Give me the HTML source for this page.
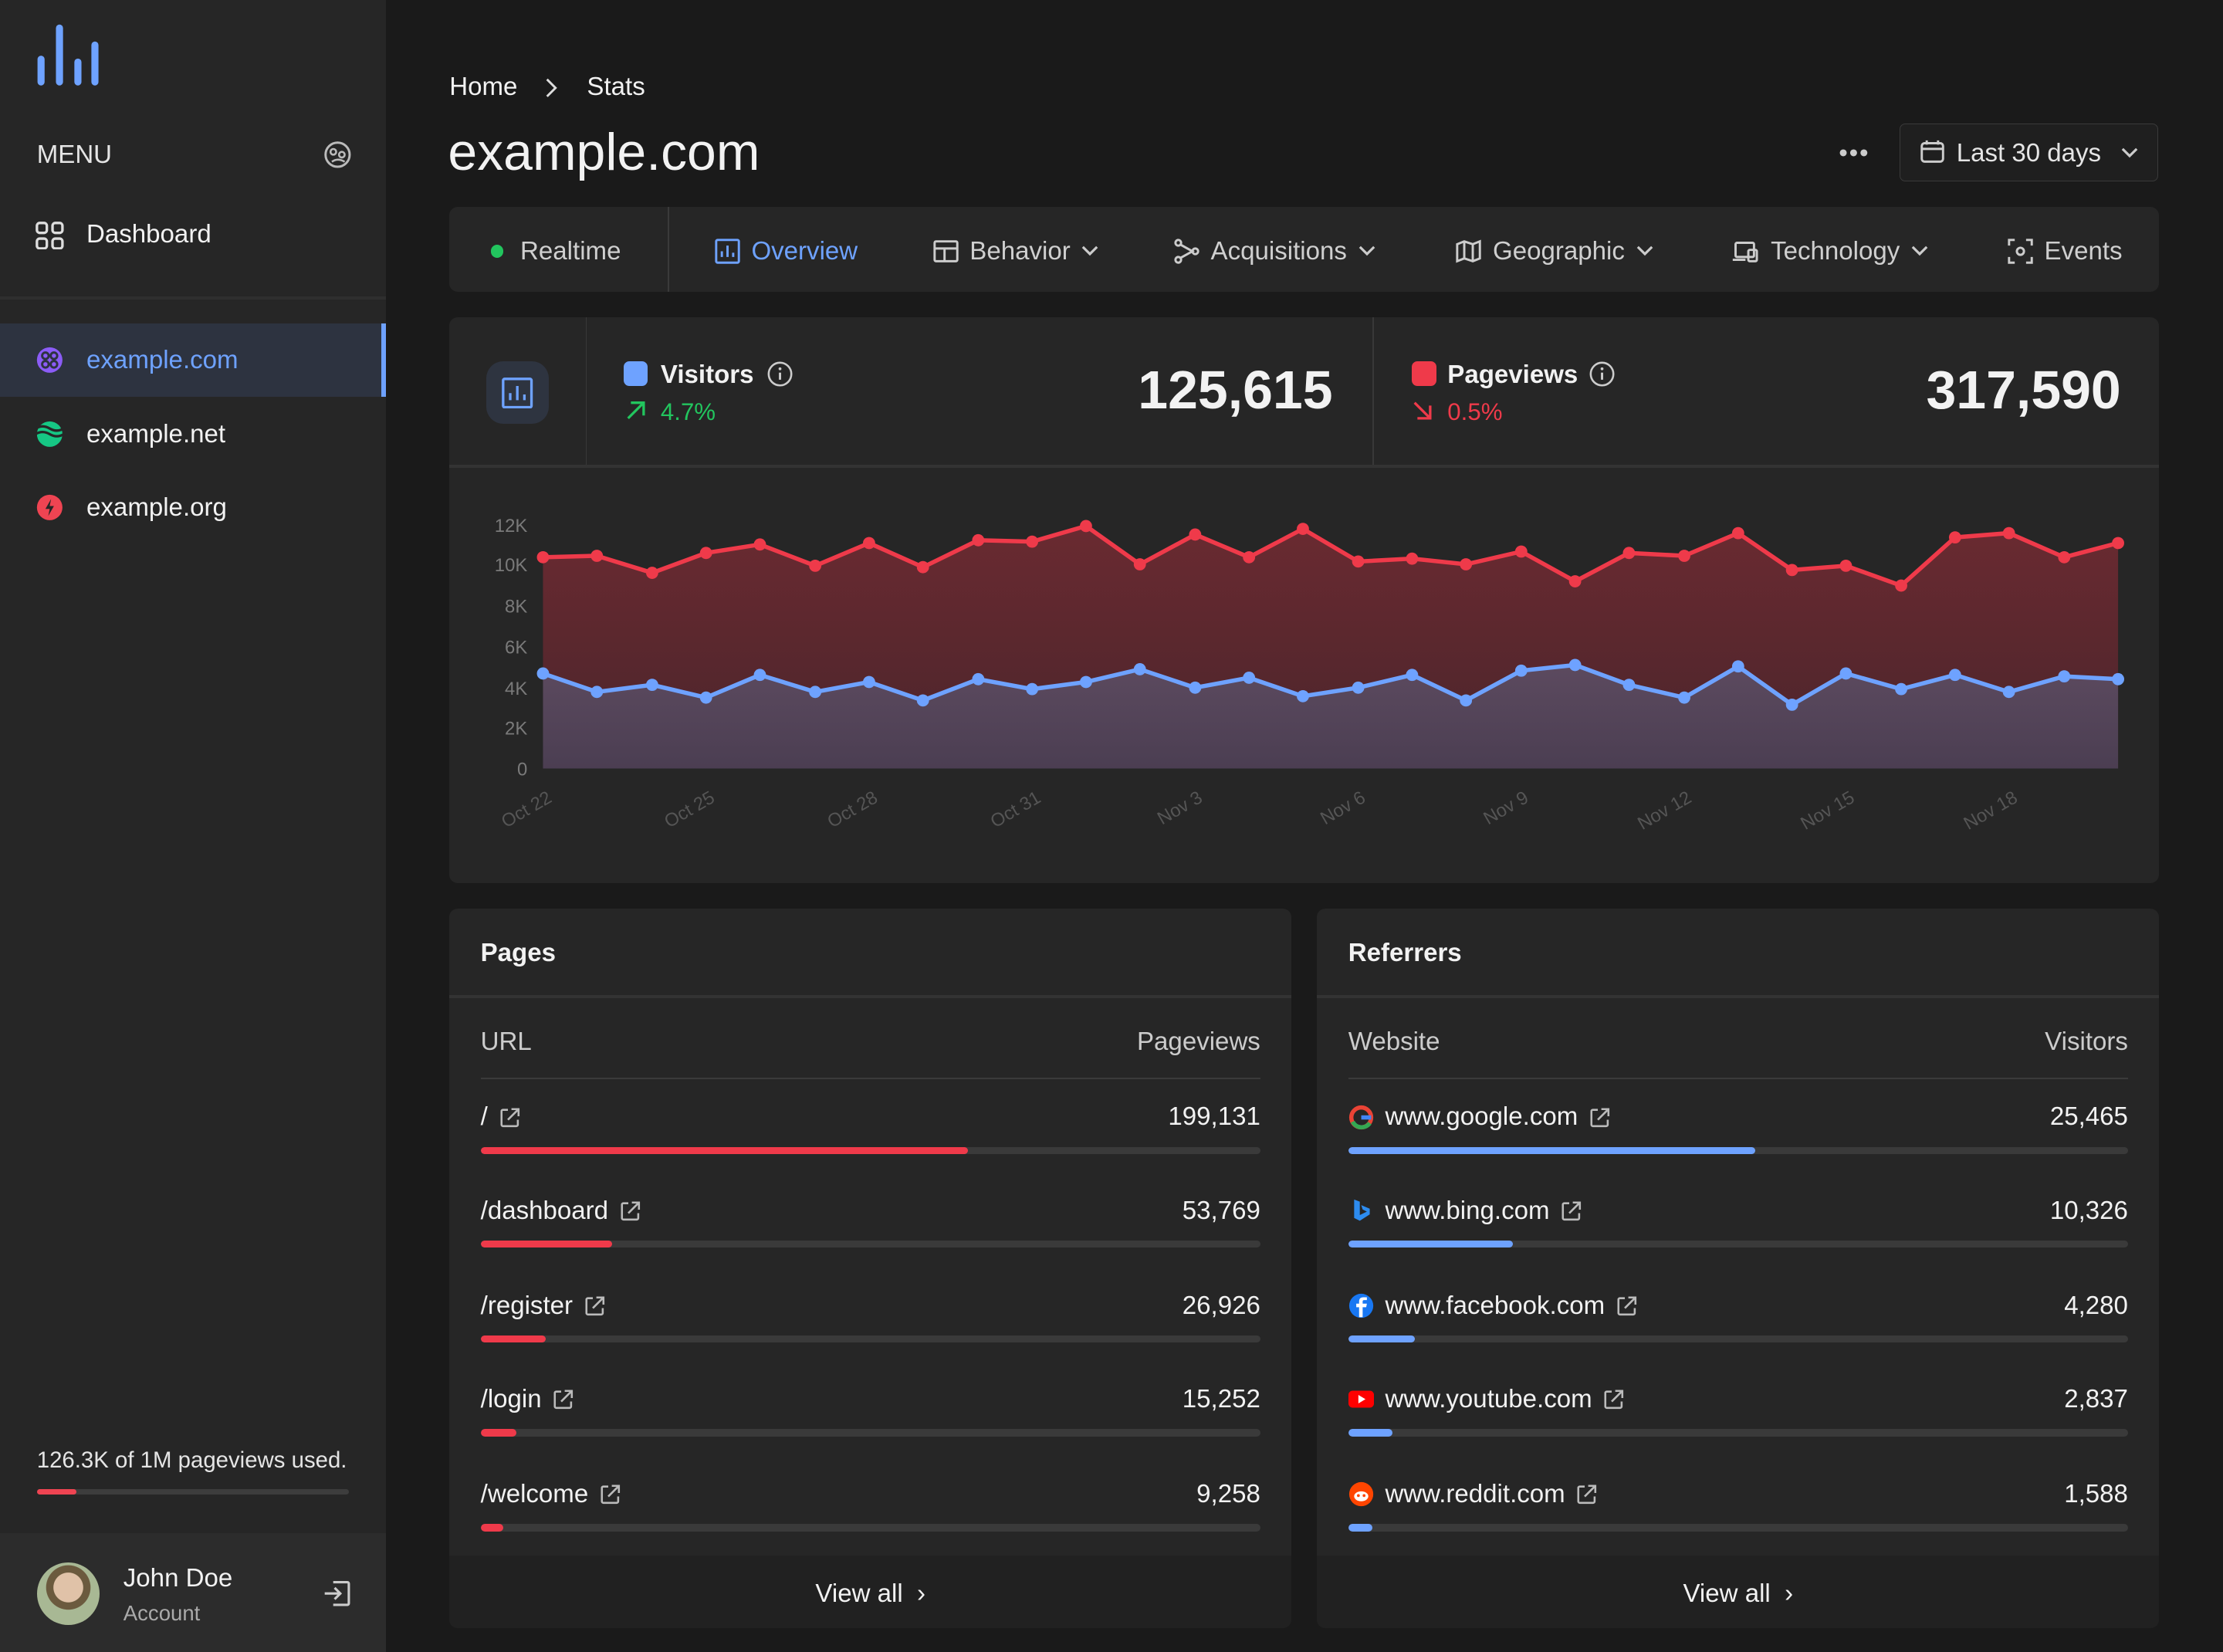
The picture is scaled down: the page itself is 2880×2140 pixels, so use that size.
<!DOCTYPE html>
<html><head><meta charset="utf-8">
<style>
html,body{margin:0;padding:0;background:#1a1a1a;}
body{width:1568px;height:1165px;zoom:1.836735;overflow:hidden;position:relative;font-family:"Liberation Sans",Arial,sans-serif;color:#f2f2f2;}
.a{position:absolute;}
.sb{left:0;top:0;width:272px;height:1165px;background:#262626;}
svg{display:block}
.t18{font-size:18px;}
.card{background:#262626;border-radius:6px;}
.tab{position:absolute;top:167px;font-size:18px;color:#cfcfcf;display:flex;align-items:center;gap:8px;}
.row{position:absolute;left:22px;right:22px;height:20px;font-size:18px;display:flex;justify-content:space-between;align-items:center;}
.track{position:absolute;left:22px;right:22px;height:5px;background:#3a3a3a;border-radius:3px;overflow:hidden}
.track i{display:block;height:100%;border-radius:3px}
.ext{margin-left:8px}
.lbl{display:flex;align-items:center;gap:0}
</style></head><body>
<svg width="0" height="0" style="position:absolute"><defs><g id="ex"><path d="M6 2 H2.5 a1 1 0 0 0 -1 1 V12.5 a1 1 0 0 0 1 1 H12 a1 1 0 0 0 1 -1 V9" fill="none" stroke="#bbb" stroke-width="1.4"/><path d="M6 9 L13 2 M8.5 1.5 H13.5 V6.5" fill="none" stroke="#bbb" stroke-width="1.4"/></g></defs></svg>
<div class="a sb">
  <svg class="a" style="left:24px;top:16px" width="48" height="46"><g stroke="#6ea2ff" stroke-width="5" stroke-linecap="round"><line x1="5" y1="26" x2="5" y2="42"/><line x1="18" y1="4" x2="18" y2="42"/><line x1="31" y1="28" x2="31" y2="42"/><line x1="43" y1="16" x2="43" y2="42"/></g></svg>
  <div class="a t18" style="left:26px;top:99px;color:#e5e5e5">MENU</div>
  <svg class="a" style="left:228px;top:99px" width="20" height="20"><circle cx="10" cy="10" r="8.5" fill="none" stroke="#bbb" stroke-width="1.6"/><circle cx="7" cy="8" r="2" fill="none" stroke="#bbb" stroke-width="1.4"/><circle cx="13" cy="10" r="2" fill="none" stroke="#bbb" stroke-width="1.4"/><path d="M6 15 q4 -3 9 0" stroke="#bbb" fill="none" stroke-width="1.4"/></svg>
  <svg class="a" style="left:25px;top:156px" width="20" height="20"><g fill="none" stroke="#ddd" stroke-width="1.8"><rect x="1" y="1" width="7" height="7" rx="2"/><rect x="12" y="1" width="7" height="7" rx="2"/><rect x="1" y="12" width="7" height="7" rx="2"/><rect x="12" y="12" width="7" height="7" rx="2"/></g></svg>
  <div class="a t18" style="left:61px;top:155px">Dashboard</div>
  <div class="a" style="left:0;top:209px;width:272px;height:2px;background:#2f2f2f"></div>
  <div class="a" style="left:0;top:228px;width:272px;height:52px;background:#2d3340"></div>
  <div class="a" style="left:269px;top:228px;width:3px;height:52px;background:#6ea2ff"></div>
  <svg class="a" style="left:25px;top:244px" width="20" height="20"><circle cx="10" cy="10" r="9" fill="#8b5cf6"/><g fill="none" stroke="#2d3340" stroke-width="1.6"><circle cx="7" cy="7" r="2.3"/><circle cx="13" cy="7" r="2.3"/><circle cx="7" cy="13" r="2.3"/><circle cx="13" cy="13" r="2.3"/></g></svg>
  <div class="a t18" style="left:61px;top:244px;color:#6ea2ff">example.com</div>
  <svg class="a" style="left:25px;top:296px" width="20" height="20"><circle cx="10" cy="10" r="9" fill="#16c784"/><g stroke="#262626" stroke-width="1.8" fill="none"><path d="M0 6 q5 -3 10 0 t10 0"/><path d="M0 10 q5 -3 10 0 t10 0"/></g></svg>
  <div class="a t18" style="left:61px;top:296px">example.net</div>
  <svg class="a" style="left:25px;top:348px" width="20" height="20"><circle cx="10" cy="10" r="9" fill="#ef4452"/><path d="M11 4 L7 11 H10 L9 16 L13 9 H10 Z" fill="#262626"/></svg>
  <div class="a t18" style="left:61px;top:348px">example.org</div>
  <div class="a" style="left:26px;top:1021px;font-size:16px;color:#e5e5e5">126.3K of 1M pageviews used.</div>
  <div class="a" style="left:26px;top:1050px;width:220px;height:4px;background:#3d3d3d;border-radius:2px"><div style="width:28px;height:4px;background:#ef4452;border-radius:2px"></div></div>
  <div class="a" style="left:0;top:1081px;width:272px;height:84px;background:#2c2c2c"></div>
  <div class="a" style="left:26px;top:1102px;width:44px;height:44px;border-radius:50%;background:radial-gradient(circle at 50% 40%,#e0c2a8 0 30%,#6b5a3e 31% 45%,#a8b894 46%)"></div>
  <div class="a" style="left:87px;top:1103px;font-size:18px">John Doe</div>
  <div class="a" style="left:87px;top:1129px;font-size:15px;color:#aaa">Account</div>
  <svg class="a" style="left:227px;top:1113px" width="22" height="22"><g fill="none" stroke="#ccc" stroke-width="1.7"><path d="M8 3 H18 a1 1 0 0 1 1 1 V18 a1 1 0 0 1 -1 1 H8"/><path d="M2 11 H13 M9 7 L13 11 L9 15"/></g></svg>
</div>

<div class="a" style="left:317px;top:51px;font-size:18px">Home</div>
<svg class="a" style="left:384px;top:55px" width="10" height="14"><path d="M2 1 L8 7 L2 13" stroke="#ddd" stroke-width="1.6" fill="none"/></svg>
<div class="a" style="left:414px;top:51px;font-size:18px">Stats</div>
<div class="a" style="left:316px;top:86px;font-size:37px;">example.com</div>
<div class="a" style="left:1297px;top:98px;font-size:18px;color:#ccc;letter-spacing:1px">•••</div>
<div class="a" style="left:1340px;top:87px;width:181px;height:40px;border:1px solid #3a3a3a;border-radius:4px;background:#1f1f1f"></div>
<svg class="a" style="left:1354px;top:98px" width="18" height="18"><g fill="none" stroke="#ccc" stroke-width="1.6"><rect x="1.5" y="3" width="15" height="13" rx="2"/><path d="M1.5 7 H16.5 M5 1 V4 M13 1 V4"/></g></svg>
<div class="a" style="left:1380px;top:98px;font-size:18px;color:#e5e5e5">Last 30 days</div>
<svg class="a" style="left:1496px;top:104px" width="12" height="8"><path d="M1 1 L6 6 L11 1" stroke="#ccc" stroke-width="1.7" fill="none"/></svg>

<div class="a card" style="left:317px;top:146px;width:1206px;height:60px"></div>
<div class="a" style="left:471px;top:146px;width:1px;height:60px;background:#3a3a3a"></div>
<div class="tab" style="left:346px"><span style="width:9px;height:9px;border-radius:50%;background:#22c55e;display:inline-block;margin-right:4px"></span>Realtime</div>
<div class="tab" style="left:504px;color:#6ea2ff"><svg width="18" height="18"><g fill="none" stroke="#6ea2ff" stroke-width="1.6"><rect x="1" y="1" width="16" height="16" rx="1"/><path d="M5 13 V9 M9 13 V5 M13 13 V10"/></g></svg>Overview</div>
<div class="tab" style="left:658px"><svg width="18" height="18"><g fill="none" stroke="#ccc" stroke-width="1.6"><rect x="1" y="2" width="16" height="14" rx="1"/><path d="M1 7 H17 M8 7 V16"/></g></svg>Behavior <svg width="12" height="8"><path d="M1 1 L6 6 L11 1" stroke="#ccc" stroke-width="1.7" fill="none"/></svg></div>
<div class="tab" style="left:828px"><svg width="18" height="18"><g fill="none" stroke="#ccc" stroke-width="1.6"><circle cx="3" cy="3" r="2"/><circle cx="3" cy="15" r="2"/><circle cx="15" cy="9" r="2"/><path d="M4 4 L13 9 L4 14"/></g></svg>Acquisitions <svg width="12" height="8"><path d="M1 1 L6 6 L11 1" stroke="#ccc" stroke-width="1.7" fill="none"/></svg></div>
<div class="tab" style="left:1027px"><svg width="18" height="18"><g fill="none" stroke="#ccc" stroke-width="1.6"><path d="M1 4 L6 2 L12 4 L17 2 V14 L12 16 L6 14 L1 16 Z M6 2 V14 M12 4 V16"/></g></svg>Geographic <svg width="12" height="8"><path d="M1 1 L6 6 L11 1" stroke="#ccc" stroke-width="1.7" fill="none"/></svg></div>
<div class="tab" style="left:1221px"><svg width="20" height="18"><g fill="none" stroke="#ccc" stroke-width="1.6"><rect x="3" y="3" width="13" height="10" rx="1"/><path d="M1 15 H10"/><rect x="12" y="8" width="6" height="8" rx="1"/></g></svg>Technology <svg width="12" height="8"><path d="M1 1 L6 6 L11 1" stroke="#ccc" stroke-width="1.7" fill="none"/></svg></div>
<div class="tab" style="left:1416px"><svg width="18" height="18"><g fill="none" stroke="#ccc" stroke-width="1.6"><path d="M1 5 V1 H5 M13 1 H17 V5 M17 13 V17 H13 M5 17 H1 V13"/><circle cx="9" cy="9" r="2.5"/></g></svg>Events</div>

<div class="a card" style="left:317px;top:224px;width:1206px;height:399px"></div>
<div class="a" style="left:317px;top:328px;width:1206px;height:2px;background:#333"></div>
<div class="a" style="left:413px;top:224px;width:1px;height:104px;background:#383838"></div>
<div class="a" style="left:968px;top:224px;width:1px;height:104px;background:#383838"></div>
<div class="a" style="left:343px;top:255px;width:44px;height:44px;border-radius:12px;background:#2e3440"></div>
<svg class="a" style="left:354px;top:266px" width="22" height="22"><g fill="none" stroke="#6ea2ff" stroke-width="1.8"><rect x="1" y="1" width="20" height="20" rx="1"/><path d="M6 16 V11 M11 16 V6 M16 16 V12"/></g></svg>
<div class="a" style="left:440px;top:255px;width:17px;height:17px;border-radius:4px;background:#6ea2ff"></div>
<div class="a" style="left:466px;top:254px;font-size:18px;font-weight:bold">Visitors</div>
<svg class="a" style="left:541px;top:255px" width="18" height="18"><circle cx="9" cy="9" r="8" fill="none" stroke="#ccc" stroke-width="1.4"/><path d="M9 8 V13" stroke="#ccc" stroke-width="1.6"/><circle cx="9" cy="5.3" r="1" fill="#ccc"/></svg>
<svg class="a" style="left:441px;top:282px" width="15" height="15"><path d="M2 13 L13 2 M4 2 H13 V11" stroke="#22c55e" stroke-width="1.8" fill="none"/></svg>
<div class="a" style="left:466px;top:281px;font-size:17px;color:#22c55e">4.7%</div>
<div class="a" style="left:700px;top:253px;width:240px;text-align:right;font-size:38px;font-weight:bold">125,615</div>
<div class="a" style="left:996px;top:255px;width:17px;height:17px;border-radius:4px;background:#ef3a4a"></div>
<div class="a" style="left:1021px;top:254px;font-size:18px;font-weight:bold">Pageviews</div>
<svg class="a" style="left:1121px;top:255px" width="18" height="18"><circle cx="9" cy="9" r="8" fill="none" stroke="#ccc" stroke-width="1.4"/><path d="M9 8 V13" stroke="#ccc" stroke-width="1.6"/><circle cx="9" cy="5.3" r="1" fill="#ccc"/></svg>
<svg class="a" style="left:996px;top:282px" width="15" height="15"><path d="M2 2 L13 13 M13 4 V13 H4" stroke="#ef3a4a" stroke-width="1.8" fill="none"/></svg>
<div class="a" style="left:1021px;top:281px;font-size:17px;color:#ef3a4a">0.5%</div>
<div class="a" style="left:1256px;top:253px;width:240px;text-align:right;font-size:38px;font-weight:bold">317,590</div>

<svg class="a" style="left:0;top:0" width="1568" height="640">
<defs>
<linearGradient id="rg" x1="0" y1="0" x2="0" y2="1"><stop offset="0" stop-color="#6a2a31"/><stop offset="1" stop-color="#4a252b"/></linearGradient>
<linearGradient id="bg" x1="0" y1="0" x2="0" y2="1"><stop offset="0" stop-color="#5c4a5f"/><stop offset="1" stop-color="#4b3e52"/></linearGradient>
<marker id="mr" markerWidth="10" markerHeight="10" refX="5" refY="5" markerUnits="userSpaceOnUse"><circle cx="5" cy="5" r="4.3" fill="#ef3a4a"/></marker>
<marker id="mb" markerWidth="10" markerHeight="10" refX="5" refY="5" markerUnits="userSpaceOnUse"><circle cx="5" cy="5" r="4.3" fill="#6ea2ff"/></marker>
</defs>
<polygon fill="url(#rg)" points="383,542 383,393 421,392 460,404 498,390 536,384 575,399 613,383 651,400 690,381 728,382 766,371 804,398 843,377 881,393 919,373 958,396 996,394 1034,398 1073,389 1111,410 1149,390 1188,392 1226,376 1264,402 1302,399 1341,413 1379,379 1417,376 1456,393 1494,383 1494,542"/>
<polygon fill="url(#bg)" points="383,542 383,475 421,488 460,483 498,492 536,476 575,488 613,481 651,494 690,479 728,486 766,481 804,472 843,485 881,478 919,491 958,485 996,476 1034,494 1073,473 1111,469 1149,483 1188,492 1226,470 1264,497 1302,475 1341,486 1379,476 1417,488 1456,477 1494,479 1494,542"/>
<polyline fill="none" stroke="#ef3a4a" stroke-width="3" marker-start="url(#mr)" marker-mid="url(#mr)" marker-end="url(#mr)" points="383,393 421,392 460,404 498,390 536,384 575,399 613,383 651,400 690,381 728,382 766,371 804,398 843,377 881,393 919,373 958,396 996,394 1034,398 1073,389 1111,410 1149,390 1188,392 1226,376 1264,402 1302,399 1341,413 1379,379 1417,376 1456,393 1494,383"/>
<polyline fill="none" stroke="#6ea2ff" stroke-width="3" marker-start="url(#mb)" marker-mid="url(#mb)" marker-end="url(#mb)" points="383,475 421,488 460,483 498,492 536,476 575,488 613,481 651,494 690,479 728,486 766,481 804,472 843,485 881,478 919,491 958,485 996,476 1034,494 1073,473 1111,469 1149,483 1188,492 1226,470 1264,497 1302,475 1341,486 1379,476 1417,488 1456,477 1494,479"/>
<g font-family="Liberation Sans, sans-serif" font-size="13" fill="#7a7a7a" text-anchor="end">
<text x="372" y="375">12K</text><text x="372" y="403">10K</text><text x="372" y="432">8K</text><text x="372" y="461">6K</text><text x="372" y="490">4K</text><text x="372" y="518">2K</text><text x="372" y="547">0</text>
</g>
<g font-family="Liberation Sans, sans-serif" font-size="13" fill="#555" text-anchor="end">
<text transform="translate(390,565) rotate(-30)">Oct 22</text>
<text transform="translate(505,565) rotate(-30)">Oct 25</text>
<text transform="translate(620,565) rotate(-30)">Oct 28</text>
<text transform="translate(735,565) rotate(-30)">Oct 31</text>
<text transform="translate(849,565) rotate(-30)">Nov 3</text>
<text transform="translate(964,565) rotate(-30)">Nov 6</text>
<text transform="translate(1079,565) rotate(-30)">Nov 9</text>
<text transform="translate(1194,565) rotate(-30)">Nov 12</text>
<text transform="translate(1309,565) rotate(-30)">Nov 15</text>
<text transform="translate(1424,565) rotate(-30)">Nov 18</text>
</g>
</svg>

<!-- Pages -->
<div class="a card" style="left:317px;top:641px;width:594px;height:507px;overflow:hidden">
  <div class="a" style="left:22px;top:21px;font-size:18px;font-weight:bold">Pages</div>
  <div class="a" style="left:0;top:61px;width:100%;height:2px;background:#333"></div>
  <div class="row" style="top:84px;color:#ccc"><span>URL</span><span>Pageviews</span></div>
  <div class="a" style="left:22px;right:22px;top:119px;height:1px;background:#3a3a3a"></div>
  <div class="row" style="top:137px"><span class="lbl">/<svg class="ext" width="15" height="15"><use href="#ex"/></svg></span><span>199,131</span></div>
  <div class="track" style="top:168px"><i style="width:344px;background:#ef3a4a"></i></div>
  <div class="row" style="top:203px"><span class="lbl">/dashboard<svg class="ext" width="15" height="15"><use href="#ex"/></svg></span><span>53,769</span></div>
  <div class="track" style="top:234px"><i style="width:93px;background:#ef3a4a"></i></div>
  <div class="row" style="top:270px"><span class="lbl">/register<svg class="ext" width="15" height="15"><use href="#ex"/></svg></span><span>26,926</span></div>
  <div class="track" style="top:301px"><i style="width:46px;background:#ef3a4a"></i></div>
  <div class="row" style="top:336px"><span class="lbl">/login<svg class="ext" width="15" height="15"><use href="#ex"/></svg></span><span>15,252</span></div>
  <div class="track" style="top:367px"><i style="width:25px;background:#ef3a4a"></i></div>
  <div class="row" style="top:403px"><span class="lbl">/welcome<svg class="ext" width="15" height="15"><use href="#ex"/></svg></span><span>9,258</span></div>
  <div class="track" style="top:434px"><i style="width:16px;background:#ef3a4a"></i></div>
  <div class="a" style="left:0;top:456px;width:100%;height:51px;background:#212121"></div>
  <div class="a" style="left:0;top:473px;width:100%;text-align:center;font-size:18px">View all &nbsp;›</div>
</div>

<!-- Referrers -->
<div class="a card" style="left:929px;top:641px;width:594px;height:507px;overflow:hidden">
  <div class="a" style="left:22px;top:21px;font-size:18px;font-weight:bold">Referrers</div>
  <div class="a" style="left:0;top:61px;width:100%;height:2px;background:#333"></div>
  <div class="row" style="top:84px;color:#ccc"><span>Website</span><span>Visitors</span></div>
  <div class="a" style="left:22px;right:22px;top:119px;height:1px;background:#3a3a3a"></div>
  <div class="row" style="top:137px"><span class="lbl"><svg width="18" height="18" style="margin-right:8px"><circle cx="9" cy="9" r="7" fill="none" stroke="#ea4335" stroke-width="3"/><path d="M9 9 H16" stroke="#4285f4" stroke-width="3"/><path d="M3 12 A7 7 0 0 0 15 13" stroke="#34a853" stroke-width="3" fill="none"/></svg>www.google.com<svg class="ext" width="15" height="15"><use href="#ex"/></svg></span><span>25,465</span></div>
  <div class="track" style="top:168px"><i style="width:287px;background:#6ea2ff"></i></div>
  <div class="row" style="top:203px"><span class="lbl"><svg width="18" height="18" style="margin-right:8px"><path d="M4 1 L8 2.5 V12 L13 9.5 L10 8 L9 5 L15 7.5 V11.5 L8 16 L4 14 Z" fill="#2d8cf0"/></svg>www.bing.com<svg class="ext" width="15" height="15"><use href="#ex"/></svg></span><span>10,326</span></div>
  <div class="track" style="top:234px"><i style="width:116px;background:#6ea2ff"></i></div>
  <div class="row" style="top:270px"><span class="lbl"><svg width="18" height="18" style="margin-right:8px"><circle cx="9" cy="9" r="8.5" fill="#1877f2"/><path d="M10 17 V10 H12.5 L13 7.5 H10 V6 Q10 5 11 5 H13 V3 H10.5 Q7.5 3 7.5 6 V7.5 H5.5 V10 H7.5 V17 Z" fill="#fff"/></svg>www.facebook.com<svg class="ext" width="15" height="15"><use href="#ex"/></svg></span><span>4,280</span></div>
  <div class="track" style="top:301px"><i style="width:47px;background:#6ea2ff"></i></div>
  <div class="row" style="top:336px"><span class="lbl"><svg width="18" height="18" style="margin-right:8px"><rect x="0" y="3" width="18" height="12" rx="3" fill="#ff0000"/><path d="M7 6 L12 9 L7 12 Z" fill="#fff"/></svg>www.youtube.com<svg class="ext" width="15" height="15"><use href="#ex"/></svg></span><span>2,837</span></div>
  <div class="track" style="top:367px"><i style="width:31px;background:#6ea2ff"></i></div>
  <div class="row" style="top:403px"><span class="lbl"><svg width="18" height="18" style="margin-right:8px"><circle cx="9" cy="9" r="8.5" fill="#ff4500"/><ellipse cx="9" cy="10.5" rx="5" ry="3.5" fill="#fff"/><circle cx="7" cy="10" r="1" fill="#ff4500"/><circle cx="11" cy="10" r="1" fill="#ff4500"/></svg>www.reddit.com<svg class="ext" width="15" height="15"><use href="#ex"/></svg></span><span>1,588</span></div>
  <div class="track" style="top:434px"><i style="width:17px;background:#6ea2ff"></i></div>
  <div class="a" style="left:0;top:456px;width:100%;height:51px;background:#212121"></div>
  <div class="a" style="left:0;top:473px;width:100%;text-align:center;font-size:18px">View all &nbsp;›</div>
</div>
</body></html>
